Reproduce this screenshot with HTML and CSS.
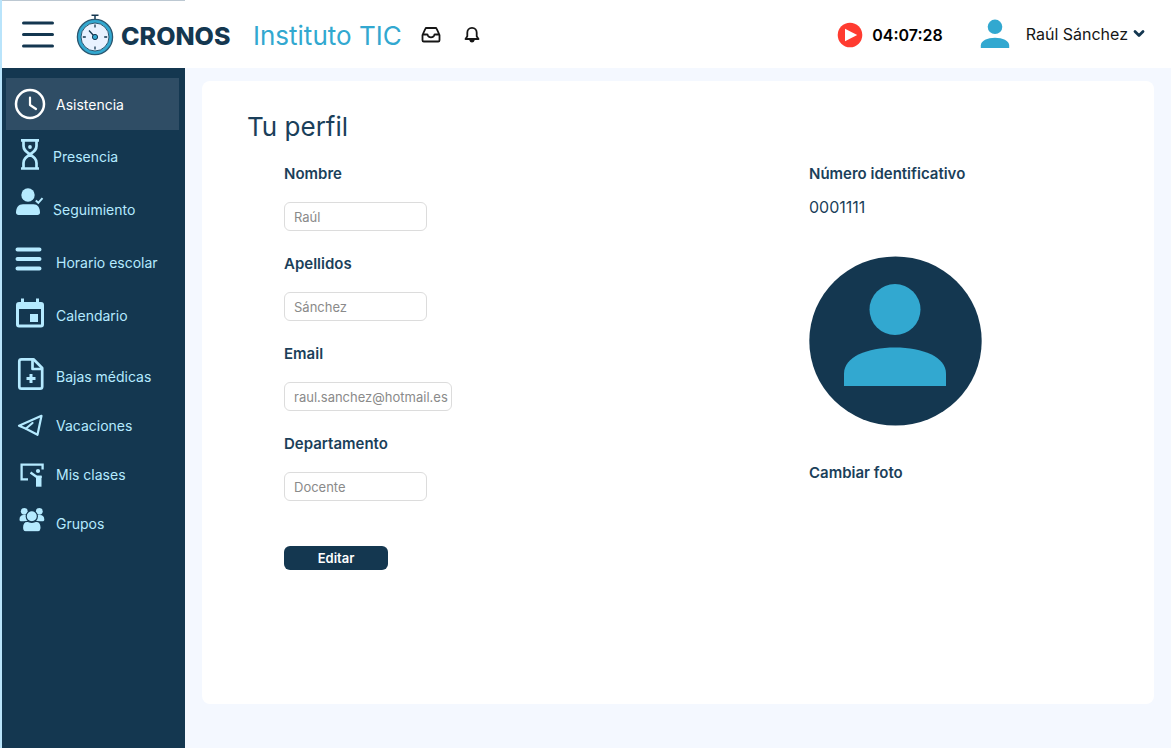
FILE: index.html
```html
<!DOCTYPE html>
<html lang="es">
<head>
<meta charset="utf-8">
<meta name="viewport" content="width=device-width, initial-scale=1">
<title>Cronos - Tu perfil</title>
<link rel="stylesheet" href="styles.css">
</head>
<body>
<div class="app">
  <header class="topbar">
    <div class="brand">
      <button class="icon-button menu-button" type="button" aria-label="Menú">
        <svg width="32" height="28" viewBox="0 0 32 28" fill="none" stroke="#143750" stroke-width="3" stroke-linecap="round"><path d="M1.500 2h29M1.500 13.500h29M1.500 25h29"/></svg>
      </button>
      <svg class="logo" width="38" height="42" viewBox="0 0 38 42" aria-hidden="true">
        <path d="M15.500 1.200h7M19 1.500v4" stroke="#143750" stroke-width="1.500" fill="none"/>
        <circle cx="19" cy="23" r="17.600" fill="#32a8d0" stroke="#2b5770" stroke-width="1.300"/>
        <circle cx="19" cy="23" r="14" fill="#e9f2ff" stroke="#2b5770" stroke-width="1"/>
        <path d="M19 10.500v3M19 32.500v3M6.800 23h3M28.200 23h3M13 16.500l5 5.500" stroke="#143750" stroke-width="1.300" fill="none"/>
        <circle cx="19" cy="23" r="2.600" fill="#32a8d0" stroke="#143750" stroke-width="1"/>
      </svg>
      <span class="brand-name">CRONOS</span>
    </div>
    <span class="school">Instituto TIC</span>
    <div class="quick">
      <button class="icon-button" type="button" aria-label="Bandeja de entrada">
        <svg width="20" height="18" viewBox="0 0 20 18" fill="none" stroke="#161616" stroke-width="1.800" stroke-linejoin="round"><path d="M5.500 2h9c.6 0 1 .3 1.200.8L18.500 9v5.200c0 .8-.5 1.300-1.300 1.300H2.800c-.8 0-1.300-.5-1.300-1.300V9l2.800-6.200C4.500 2.300 4.900 2 5.500 2zM1.500 8.500H6c.4 0 .7.300.8.700.4 1.300 1.600 2.100 3.200 2.100s2.800-.8 3.200-2.100c.1-.4.4-.7.8-.7h4.500"/></svg>
      </button>
      <button class="icon-button" type="button" aria-label="Notificaciones">
        <svg width="18" height="18" viewBox="0 0 18 18" fill="none" stroke="#161616" stroke-width="1.800" stroke-linejoin="round" stroke-linecap="round"><path d="M9 1.800c-3 0-4.700 2.200-4.700 5v3.500L2.500 13h13l-1.800-2.700V6.800c0-2.800-1.700-5-4.700-5z"/><path d="M7.200 14c.3 1.200.9 1.600 1.800 1.600s1.500-.4 1.800-1.600z"/></svg>
      </button>
    </div>
    <div class="session">
      <button class="icon-button" type="button" aria-label="Iniciar">
        <svg width="26" height="26" viewBox="0 0 26 26"><circle cx="13" cy="13" r="12.300" fill="#ff3b30"/><path d="M8 6.800v12.400L20.200 13z" fill="#fff"/></svg>
      </button>
      <time class="clock">04:07:28</time>
    </div>
    <div class="account">
      <svg width="30" height="30" viewBox="0 0 30 30" fill="#32a8d0" aria-hidden="true"><circle cx="15" cy="7.800" r="7.300"/><path d="M.8 29v-2.500C.8 21.500 7.500 18.700 15 18.700s14.200 2.800 14.200 7.800V29z"/></svg>
      <button class="icon-button account-button" type="button">Raúl Sánchez
        <svg width="12" height="10" viewBox="0 0 12 10" fill="none" stroke="#143750" stroke-width="2.800" stroke-linecap="round" stroke-linejoin="round"><path d="M2 2.500l4 4 4-4"/></svg>
      </button>
    </div>
  </header>

  <nav class="sidebar" aria-label="Principal">
    <ul class="nav-list">
      <li><a class="nav-link nav-link--active" href="#asistencia">
        <svg class="nav-icon" viewBox="0 0 32 32" fill="none" stroke="currentColor" stroke-width="2.500" stroke-linecap="round" stroke-linejoin="round"><circle cx="16" cy="16" r="14"/><path d="M16 9.500v7.500l6 4" stroke-width="2.200"/></svg>
        Asistencia</a></li>
      <li><a class="nav-link nav-link--near" href="#presencia">
        <svg class="nav-icon" viewBox="0 2 32 32" fill="none" stroke="currentColor" stroke-width="2.700"><path d="M7 2.300h18M7 30.500h18"/><path d="M9.500 2v6c0 4 2.500 5.500 6.500 8.400 4-2.900 6.500-4.400 6.500-8.400V2M9.500 30.500v-5.500c0-4 2.500-5.700 6.500-8.600 4 2.900 6.500 4.600 6.500 8.600v5.500"/><circle cx="16" cy="9" r="1.900" fill="currentColor" stroke="none"/></svg>
        Presencia</a></li>
      <li><a class="nav-link nav-link--near" href="#seguimiento">
        <svg class="nav-icon" viewBox="0 5 32 32" fill="currentColor"><circle cx="14" cy="7" r="6.700"/><path d="M2 24.500c0-5 2.500-8.300 7-8.300h10.500c4 0 6.500 3.300 6.500 8.300 0 1.500-1 2.500-2.500 2.500h-19C3 27 2 26 2 24.500z"/><path d="M21.800 12.500l2.500 2.300 4.200-4.600" fill="none" stroke="currentColor" stroke-width="2"/></svg>
        Seguimiento</a></li>
      <li><a class="nav-link" href="#horario">
        <svg class="nav-icon" viewBox="0 1 32 32" fill="none" stroke="currentColor" stroke-width="4" stroke-linecap="round"><path d="M3.500 4.500h22M3.500 14h22M3.500 23.500h22"/></svg>
        Horario escolar</a></li>
      <li><a class="nav-link" href="#calendario">
        <svg class="nav-icon" viewBox="0 1 32 32" fill="none" stroke="currentColor"><rect x="3.500" y="5.500" width="25" height="22.500" rx="1.500" stroke-width="3"/><path d="M3 8.500h26" stroke-width="5"/><path d="M8.500.5v5M23.500.5v5" stroke-width="3"/><path d="M16 16h8v8h-8z" fill="currentColor" stroke="none"/></svg>
        Calendario</a></li>
    </ul>
    <ul class="nav-list nav-list--compact">
      <li><a class="nav-link" href="#bajas">
        <svg class="nav-icon" viewBox="0 0 32 32" fill="none" stroke="currentColor" stroke-width="2.700" stroke-linejoin="round"><path d="M19.500-.7H7.500C6 -.7 5.300.1 5.300 1.300v25.200c0 1.500.7 2.200 2.200 2.200h18.500c1.500 0 2.200-.7 2.200-2.200V8z"/><path d="M18.500-.7v9.700h9.500"/><path d="M17 14v9M12.500 18.500h9" stroke-width="3"/></svg>
        Bajas médicas</a></li>
      <li><a class="nav-link" href="#vacaciones">
        <svg class="nav-icon" viewBox="0 0 32 32" fill="none" stroke="currentColor" stroke-width="2.200" stroke-linejoin="round" stroke-linecap="round"><path d="M27.500 6.800L5 16.800l7 3 11.500 6z"/><path d="M12 19.500l6.500-5.500"/></svg>
        Vacaciones</a></li>
      <li><a class="nav-link" href="#clases">
        <svg class="nav-icon" viewBox="0 0 32 32" fill="none" stroke="currentColor" stroke-width="2.300"><path d="M14 21.300H7.600V6.600h21v4.900"/><circle cx="24" cy="13" r="2.100" fill="currentColor" stroke="none"/><path d="M16.500 14.500l6 4.300h5.200"/><path d="M22 17.700h5.500v11H22z" fill="currentColor" stroke="none"/></svg>
        Mis clases</a></li>
      <li><a class="nav-link" href="#grupos">
        <svg class="nav-icon" viewBox="0 0 32 32" fill="currentColor"><circle cx="10.300" cy="4.300" r="3.400"/><circle cx="25.300" cy="4.300" r="3.400"/><path d="M5.500 12.500c0-3 1.500-4.500 4-4.500h16.500c2.800 0 4.300 1.500 4.300 4.500 0 1.200-.5 1.700-1.200 1.700H6.700c-.8 0-1.200-.5-1.200-1.700z"/><circle cx="17.800" cy="9.300" r="5.600" stroke="#143750" stroke-width="1.200"/><path d="M8.500 20.500c0-4 1.600-6.200 4.700-6.200 2.800 1.200 6.400 1.200 9.200 0 3 0 4.700 2.200 4.700 6.200 0 3-1 4.300-3 4.300H11.500c-2 0-3-1.300-3-4.300z" stroke="#143750" stroke-width="1.200"/></svg>
        Grupos</a></li>
    </ul>
  </nav>

  <main class="content">
    <section class="card">
      <h1 class="title">Tu perfil</h1>
      <div class="profile">
        <form class="form">
          <div class="field"><label class="label" for="nombre">Nombre</label><input class="input" id="nombre" type="text" value="Raúl"></div>
          <div class="field"><label class="label" for="apellidos">Apellidos</label><input class="input" id="apellidos" type="text" value="Sánchez"></div>
          <div class="field"><label class="label" for="email">Email</label><input class="input input--wide" id="email" type="email" value="raul.sanchez@hotmail.es"></div>
          <div class="field"><label class="label" for="departamento">Departamento</label><input class="input" id="departamento" type="text" value="Docente"></div>
          <button class="submit" type="button">Editar</button>
        </form>
        <div class="identity">
          <h2 class="label">Número identificativo</h2>
          <p class="number">0001111</p>
          <svg class="avatar" width="173" height="170" viewBox="0 0 173 170" role="img" aria-label="Foto de perfil"><ellipse cx="86.500" cy="85" rx="86.200" ry="84.600" fill="#143750"/><g fill="#32a8d0"><circle cx="86" cy="53.500" r="25.500"/><path d="M35 130v-12.500C35 101 58 91.500 86 91.500s51 9.500 51 26V130z"/></g></svg>
          <button class="icon-button label" type="button">Cambiar foto</button>
        </div>
      </div>
    </section>
  </main>
</div>
</body>
</html>
```
FILE: styles.css
```css
* { box-sizing: border-box; }

body {
  margin: 0;
  background: #f4f8ff;
  color: #1b3f5a;
  font-family: Inter, "Liberation Sans", sans-serif;
}

.app {
  display: grid;
  grid-template: auto 1fr / 183px 1fr;
  min-height: 100vh;
  border-left: 2px solid #b9e4fb;
}

.icon-button {
  display: flex;
  padding: 0;
  border: 0;
  background: none;
  color: inherit;
  font: inherit;
  cursor: pointer;
}

.topbar {
  grid-column: 1 / -1;
  display: flex;
  align-items: center;
  height: 68px;
  padding-right: 26px;
  background: #fff;
}
.brand {
  display: flex;
  align-items: center;
  width: 183px;
  height: 100%;
  padding-left: 20px;
  border-top: 1px solid #bcc8d2;
}
.menu-button { margin-right: 22px; }
.logo { margin-right: 7px; flex: none; }
.brand-name,
.school { padding-top: 3px; line-height: 32px; }
.brand-name { color: #143750; font-size: 25px; font-weight: 800; }
.school { margin-left: 68px; color: #32a8d0; font-size: 26px; }
.quick { display: flex; gap: 22px; margin-left: 19px; padding-top: 2px; }
.session { display: flex; align-items: center; gap: 9px; margin-left: auto; padding-top: 2px; }
.clock { color: #000; font-size: 16px; font-weight: 600; }
.account { display: flex; align-items: center; gap: 16px; margin-left: 37px; }
.account-button { align-items: center; gap: 5px; color: #161616; font-size: 16px; }

.sidebar {
  display: flex;
  flex-direction: column;
  gap: 8px;
  padding: 10px 6px 10px 4px;
  background: #143750;
}
.nav-list {
  display: grid;
  grid-auto-rows: 53px;
  margin: 0;
  padding: 0;
  list-style: none;
}
.nav-list--compact { grid-auto-rows: 49px; }
.nav-link {
  display: flex;
  align-items: center;
  gap: 10px;
  height: 50px;
  padding-left: 8px;
  color: #b5eaff;
  font-size: 14px;
  text-decoration: none;
  white-space: nowrap;
}
.nav-link--near { gap: 7px; }
.nav-link--active { height: 52px; background: #2f4d65; color: #fff; }
.nav-icon { flex: none; width: 32px; height: 32px; overflow: visible; }

.content { display: flex; padding: 13px 17px 44px; }
.card {
  flex: 1;
  padding: 30px 45px;
  border-radius: 8px;
  background: #fff;
}
.title { margin: 0 0 21px; font-size: 26px; font-weight: 400; line-height: 32px; }
.profile { display: grid; grid-template-columns: 7fr 4fr; padding-left: 37px; }
.form { display: flex; flex-direction: column; align-items: flex-start; gap: 23px; }
.field { display: flex; flex-direction: column; gap: 18px; }
.label { margin: 0; font-size: 15px; font-weight: 600; line-height: 20px; }
.input {
  width: 143px;
  height: 29px;
  padding: 0 9px;
  border: 1px solid #dcdcdc;
  border-radius: 6px;
  background: #fff;
  color: #8a8a8a;
  font: 13px Inter, "Liberation Sans", sans-serif;
}
.input--wide { width: 168px; padding-right: 0; }
.submit {
  width: 104px;
  height: 24px;
  margin-top: 22px;
  padding: 0;
  border: 0;
  border-radius: 6px;
  background: #143750;
  color: #fff;
  font: 600 13px Inter, "Liberation Sans", sans-serif;
  cursor: pointer;
}
.identity { display: flex; flex-direction: column; align-items: flex-start; }
.number { margin: 11px 0 37px; font-size: 16px; line-height: 24px; }
.avatar { margin-bottom: 37px; }
.identity .icon-button { font-size: 15px; font-weight: 600; line-height: 20px; }
```
